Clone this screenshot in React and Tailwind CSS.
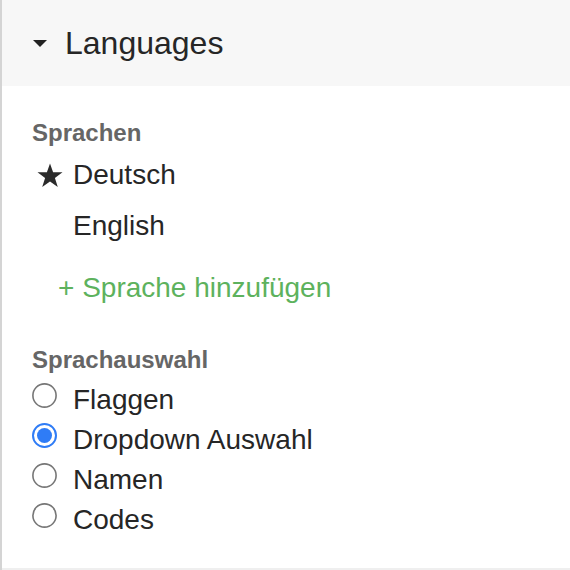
import { useState } from 'react';

const Star = () => (
  <svg width="26" height="25" viewBox="0 0 26 25" className="shrink-0">
    <polygon
      points="13,0.5 16.1,9.3 25.5,9.3 17.9,14.9 20.8,24 13,18.4 5.2,24 8.1,14.9 0.5,9.3 9.9,9.3"
      fill="#2b2b2b"
    />
  </svg>
);

const Radio = ({ checked }) => (
  <svg width="25" height="25" viewBox="0 0 25 25" className="shrink-0 mt-[3px]">
    {checked ? (
      <>
        <circle cx="12.5" cy="12.5" r="11.5" fill="#fff" stroke="#2f7cf6" strokeWidth="2" />
        <circle cx="12.5" cy="12.5" r="7.5" fill="#2f7cf6" />
      </>
    ) : (
      <circle cx="12.5" cy="12.5" r="11.6" fill="#fff" stroke="#767676" strokeWidth="1.6" />
    )}
  </svg>
);

const App = () => {
  const [mode, setMode] = useState('dropdown');
  const options = [
    { id: 'flags', label: 'Flaggen' },
    { id: 'dropdown', label: 'Dropdown Auswahl' },
    { id: 'names', label: 'Namen' },
    { id: 'codes', label: 'Codes' },
  ];

  return (
    <div
      className="w-[570px] h-[570px] bg-white border-l-2 border-[#d4d4d4] text-[#262626]"
      style={{ fontFamily: '"Liberation Sans", Helvetica, Arial, sans-serif' }}
    >
      <div className="h-[86px] bg-[#f7f7f7] flex items-center pl-[31px]">
        <svg width="14" height="7" viewBox="0 0 14 7" className="shrink-0">
          <polygon points="0,0 14,0 7,7" fill="#222" />
        </svg>
        <span className="ml-[18px] text-[32px] leading-none">Languages</span>
      </div>

      <div className="h-[484px] border-b-2 border-[#efefef] pt-[31px]">
        <div className="pl-[30px] text-[24px] leading-[32px] font-bold text-[#666]">Sprachen</div>
        <div className="mt-0">
          <div className="h-[52px] flex items-center pl-[35px] gap-[10px] text-[28px] leading-[50px]">
            <Star />
            <span>Deutsch</span>
          </div>
          <div className="h-[50px] flex items-center pl-[71px] text-[28px] leading-[50px]">
            <span>English</span>
          </div>
        </div>
        <button className="mt-[12px] pl-[56px] h-[50px] text-[28px] leading-[50px] text-[#5db25d]">
          + Sprache hinzufügen
        </button>

        <div className="mt-[31px] pl-[30px] text-[24px] leading-[32px] font-bold text-[#666]">Sprachauswahl</div>
        <div className="mt-[4px]">
          {options.map((o) => (
            <label
              key={o.id}
              onClick={() => setMode(o.id)}
              className="h-[40px] flex items-start pl-[30px] gap-[16px] text-[28px] leading-[40px] cursor-pointer"
            >
              <Radio checked={mode === o.id} />
              <span>{o.label}</span>
            </label>
          ))}
        </div>
      </div>
    </div>
  );
};

export default App;
